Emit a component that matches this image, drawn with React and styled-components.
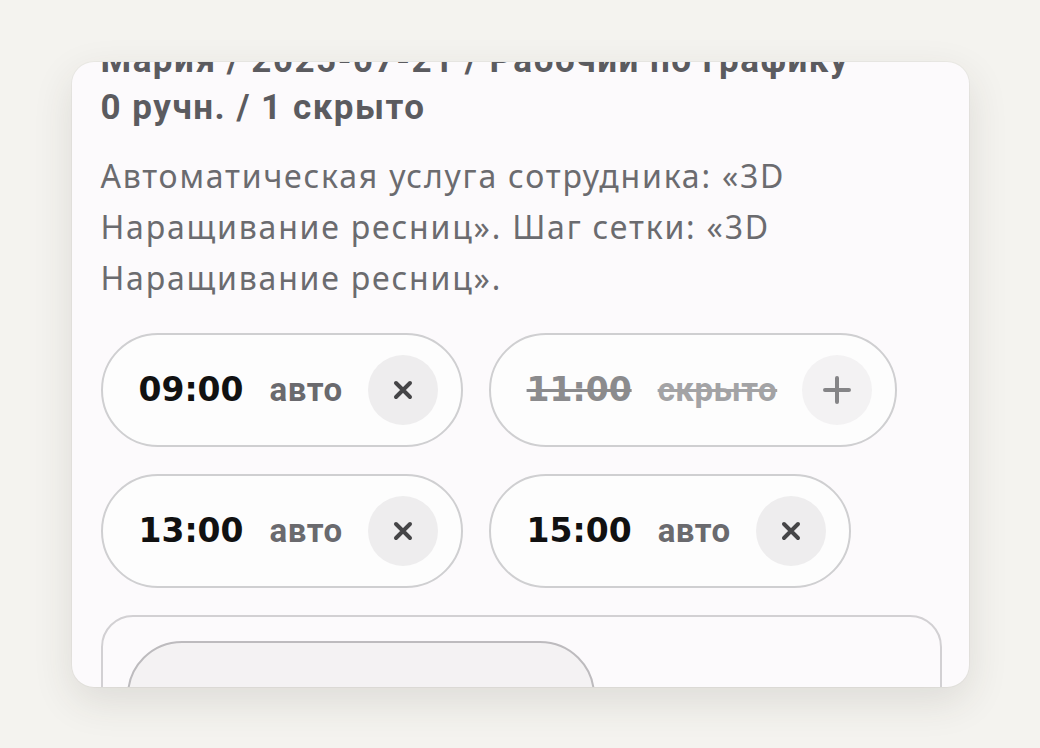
import React from 'react';
import styled, {createGlobalStyle} from 'styled-components';

const GlobalStyle = createGlobalStyle`
  html, body {
    margin: 0;
    padding: 0;
    background: #f4f3ef;
  }
  #root {
    height: 100vh;
    display: flex;
    align-items: center;
    justify-content: center;
  }
`;

const Card = styled.div`
  width: 897px;
  height: 625px;
  box-sizing: border-box;
  border-radius: 22px;
  background: #fcfafc;
  box-shadow: 0 14px 40px rgba(60, 50, 40, 0.12), 0 0 0 1px rgba(0, 0, 0, 0.03);
  overflow: hidden;
  font-family: Roboto, "Liberation Sans", sans-serif;
`;

// the panel is scrolled a little, so the first header line is cut by the card edge
const Content = styled.div`
  margin-top: -25px;
  padding: 0 26px 0 29px;
`;

const Header = styled.div`
  font-size: 35px;
  line-height: 47px;
  font-weight: 700;
  letter-spacing: 1.5px;
  color: #5b5b5f;
`;

const Description = styled.p`
  margin: 19px 0 0;
  max-width: 760px;
  font-family: "Noto Sans", sans-serif;
  font-size: 32px;
  line-height: 51px;
  letter-spacing: 1.8px;
  color: #6b6b6f;
`;

const Slots = styled.div`
  margin-top: 30px;
  display: flex;
  flex-wrap: wrap;
  gap: 27px 26px;
  max-width: 842px;
`;

const Chip = styled.div`
  display: flex;
  align-items: center;
  box-sizing: border-box;
  height: 114px;
  padding: 0 23px 0 36px;
  border: 2px solid #cfcfd1;
  border-radius: 60px;
  background: #fdfdfd;
`;

const Time = styled.span`
  font-family: "DejaVu Sans", sans-serif;
  font-size: 33px;
  font-weight: 700;
  color: ${(p) => (p.$hidden ? '#8b8b8d' : '#111')};
  text-decoration: ${(p) => (p.$hidden ? 'line-through' : 'none')};
  text-decoration-thickness: 3px;
`;

const Tag = styled.span`
  margin-left: 26px;
  font-size: 33px;
  font-weight: 700;
  letter-spacing: 0.5px;
  color: ${(p) => (p.$hidden ? '#a3a3a5' : '#6a6a6e')};
  text-decoration: ${(p) => (p.$hidden ? 'line-through' : 'none')};
  text-decoration-thickness: 3px;
`;

const RoundButton = styled.button`
  margin-left: 25px;
  width: 70px;
  height: 70px;
  border: none;
  border-radius: 50%;
  background: ${(p) => (p.$hidden ? '#f3f2f3' : '#eeedee')};
  display: flex;
  align-items: center;
  justify-content: center;
  padding: 0;
`;

const Footer = styled.div`
  margin-top: 27px;
  max-width: 841px;
  box-sizing: border-box;
  padding: 24px;
  border: 2px solid #d2d0d3;
  border-radius: 32px;
`;

const FooterButton = styled.button`
  width: 468px;
  height: 110px;
  box-sizing: border-box;
  padding: 10px 0 0 48px;
  text-align: left;
  border: 2px solid #bdbbbe;
  border-radius: 56px;
  background: #f4f2f3;
  font-family: Roboto, "Liberation Sans", sans-serif;
  font-size: 31px;
  font-weight: 700;
  color: #222;
`;

const Cross = () => (
    <svg width="20" height="20" viewBox="0 0 20 20">
        <path d="M3 3 L17 17 M17 3 L3 17" stroke="#454547" strokeWidth="4" strokeLinecap="round"/>
    </svg>
);

const Plus = () => (
    <svg width="28" height="28" viewBox="0 0 28 28">
        <path d="M14 2 V26 M2 14 H26" stroke="#858587" strokeWidth="4" strokeLinecap="round"/>
    </svg>
);

const slots = [
    {time: '09:00', hidden: false},
    {time: '11:00', hidden: true},
    {time: '13:00', hidden: false},
    {time: '15:00', hidden: false},
];

export default function App() {
    return (
        <>
            <GlobalStyle/>
            <Card>
                <Content>
                    <Header>
                        <div>Мария / 2025-07-21 / Рабочий по графику</div>
                        <div>0 ручн. / 1 скрыто</div>
                    </Header>
                    <Description>
                        Автоматическая услуга сотрудника: «3D Наращивание ресниц». Шаг сетки: «3D Наращивание ресниц».
                    </Description>
                    <Slots>
                        {slots.map((slot) => (
                            <Chip key={slot.time}>
                                <Time $hidden={slot.hidden}>{slot.time}</Time>
                                <Tag $hidden={slot.hidden}>{slot.hidden ? 'скрыто' : 'авто'}</Tag>
                                <RoundButton $hidden={slot.hidden}>
                                    {slot.hidden ? <Plus/> : <Cross/>}
                                </RoundButton>
                            </Chip>
                        ))}
                    </Slots>
                    <Footer>
                        <FooterButton>Сделать ручной</FooterButton>
                    </Footer>
                </Content>
            </Card>
        </>
    );
}
